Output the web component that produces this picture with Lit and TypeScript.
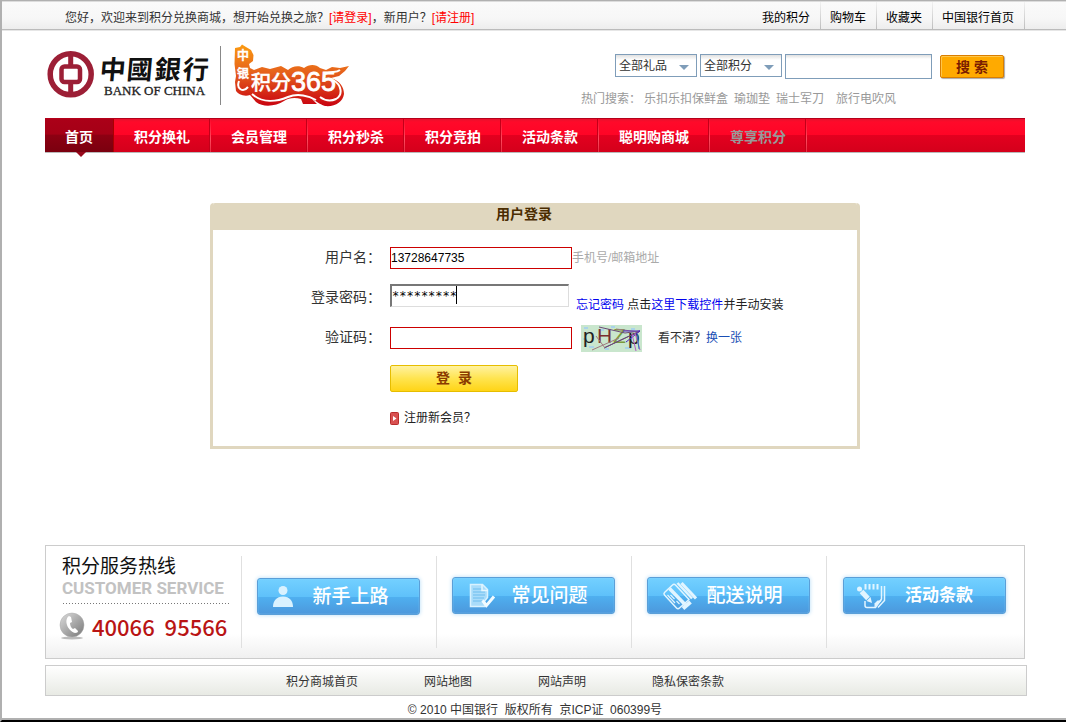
import { LitElement, html, css, svg } from "lit";
import { customElement } from "lit/decorators.js";
import { classMap } from "lit/directives/class-map.js";

const topLinks = ["我的积分", "购物车", "收藏夹", "中国银行首页"];
const hotWords = ["乐扣乐扣保鲜盒", "瑜珈垫", "瑞士军刀", "旅行电吹风"];
const navItems = ["首页", "积分换礼", "会员管理", "积分秒杀", "积分竞拍", "活动条款", "聪明购商城", "尊享积分"];
const footLinks = ["积分商城首页", "网站地图", "网站声明", "隐私保密条款"];

const personIcon = svg`<svg width="28" height="30" viewBox="0 0 28 30" fill="#d9f2ff">
  <circle cx="12" cy="8.500" r="4.500"/><path d="M2 25c0-6 3.500-10.500 10-10.500S22 19 22 25z"/></svg>`;

const pageIcon = svg`<svg width="36" height="30" viewBox="0 0 36 30">
  <path d="M4.500 3.500h12l5 5v8l-4 5 2 4h-15z" fill="#a9dcfa" stroke="#d9f2ff" stroke-width="1.500"/>
  <path d="M7 8h9M7 11h12M7 14h12M7 17h11M7 20h9" stroke="#6dbdee"/>
  <path d="M16 3.500v6h6" fill="none" stroke="#e6f7ff" stroke-width="1.500"/>
  <path d="M16.500 19.500l4 5 7.500-9" fill="none" stroke="#f2fbff" stroke-width="3"/></svg>`;

const cardIcon = svg`<svg width="36" height="30" viewBox="0 0 36 30" fill="none" stroke="#e2f5ff" stroke-linejoin="round">
  <path d="M3.500 11.500l8-7.500c1-1 2-1 3 0L28 18.500 18.500 27c-1 1-2 1-3 0L3.500 14c-.8-1-.8-1.700 0-2.500z" stroke-width="1.500"/>
  <path d="M8.500 7.500L24 23.500" stroke-width="3.500"/>
  <path d="M6.500 14l7.500 8M9.500 14l4 4M15.500 20l3 3" stroke-width="1.200"/>
  <path d="M16.500 2L31 17.500" stroke-width="2.500"/><path d="M20.500 2L35 17.500" stroke-width="3"/>
  <path d="M22 27.500l7.500-6.500" stroke-width="4"/></svg>`;

const notePadIcon = svg`<svg width="36" height="30" viewBox="0 0 36 30" fill="none" stroke="#e2f5ff">
  <path d="M8.500 3v5.500M12.500 3v5.500M16.500 3v5.500M20.500 3v5.500" stroke-width="2"/>
  <path d="M24.500 5v13l-6 8.500h-8.500c-1.500 0-2-1-2-2V20" stroke-width="1.500"/>
  <path d="M27.500 5v14.500L21 26.500" stroke-width="1.500"/>
  <path d="M17.500 26.500v-4l3-3h4.500z" fill="#e2f5ff" stroke="none"/>
  <path d="M4.500 10.500l6.500 7" stroke-width="5"/>
  <circle cx="2.500" cy="8" r="2.500" fill="#e2f5ff" stroke="none"/>
  <path d="M9.500 20l4-4 1.500 6z" fill="#e2f5ff" stroke="none"/></svg>`;

const services = [
  { text: "新手上路", icon: personIcon, low: true, bold: false },
  { text: "常见问题", icon: pageIcon, low: false, bold: false },
  { text: "配送说明", icon: cardIcon, low: false, bold: false },
  { text: "活动条款", icon: notePadIcon, low: false, bold: true },
];

@customElement("app-root")
export class AppRoot extends LitElement {
  static styles = css`
    :host {
      display: block;
      min-height: 100vh;
      box-sizing: border-box;
      border-top: 1px solid #b0b0b0;
      border-left: 2px solid #b0b0b0;
      border-bottom: 2px solid #000;
      background: #fff;
      color: #333;
      font: 12px/16px "Liberation Sans", "Noto Sans CJK SC", sans-serif;
    }
    * { box-sizing: border-box; }
    a { color: inherit; text-decoration: none; }
    ul { list-style: none; margin: 0; padding: 0; }
    input, select, button { font-family: inherit; border-radius: 0; }
    .page { padding-left: 2px; border-bottom: 2px solid #b0b0b0; }
    .wrap { max-width: 980px; margin: 0 auto; }

    .topbar {
      margin-left: -2px;
      padding-left: 2px;
      background: linear-gradient(#fafafa, #f7f7f7 60%, #ededed);
      border-top: 1px solid #dcdcdc;
      border-bottom: 1px solid #bbb;
      box-shadow: 0 1px #e6e6e6;
    }
    .topbar .wrap { display: flex; justify-content: space-between; height: 27px; }
    .hello { margin: 0; padding: 0 0 0 20px; line-height: 32px; }
    .hello a { color: #f00; }
    .toplinks { display: flex; color: #000; line-height: 32px; }
    .toplinks li {
      padding: 0 10px 0 9px;
      border-right: 1px solid;
      border-image: linear-gradient(#f4f4f4, #bbb) 1;
    }

    .header { display: flex; justify-content: space-between; height: 88px; }
    .logo { display: block; }
    .search { padding: 24px 21px 0 0; width: 464px; }
    .controls { display: flex; justify-content: flex-end; align-items: flex-start; gap: 3px; }
    .picker { position: relative; display: flex; }
    .picker svg { position: absolute; right: 8px; top: 11px; pointer-events: none; }
    .pick {
      appearance: none;
      width: 82px;
      height: 23px;
      padding: 1px 0 0 3px;
      border: 1px solid #7f9db9;
      background: linear-gradient(#e0e0e0, #fff 5px);
      color: #333;
      font-size: 12px;
    }
    .keyword {
      width: 147px;
      height: 25px;
      border: 1px solid #7f9db9;
      background: linear-gradient(#e0e0e0, #fff 4px);
    }
    .go {
      width: 64px;
      height: 23px;
      margin: 1px 0 0 5px;
      padding: 0;
      border: 1px solid #d97e00;
      border-radius: 2px;
      background: #fa0;
      box-shadow: 1px 1px 1px #aaa, inset 1px 1px #ffc64a;
      color: #7a1c00;
      font-size: 14px;
      font-weight: 700;
      line-height: 22px;
      white-space: pre;
    }
    .hot { display: flex; gap: 6px; color: #999; margin: 0; padding: 12px 0 0 20px; white-space: nowrap; }
    .hot dt { margin-right: -3px; }
    .hot dd { margin: 0; }
    .hot dd:last-child { margin-left: 6px; }

    .nav {
      display: flex;
      height: 35px;
      border-top: 1px solid #b5001a;
      border-bottom: 1px solid #b9b9b9;
      background: linear-gradient(#e8102c, #ff0a2a 3px, #ff0426 48%, #e3001f 50%, #d4001b);
      color: #fff;
      font-size: 14px;
      font-weight: 700;
      line-height: 36px;
    }
    .nav li {
      position: relative;
      padding: 0 20px;
      border-right: 1px solid;
      border-image: linear-gradient(#ff0426, #ff4a5e 60%, #e82a40) 1;
      box-shadow: inset -1px 0 #c20019;
    }
    .nav .on {
      background: linear-gradient(#ab0018, #a50016 45%, #8c0012 50%, #7a000f);
      border-right: 1px solid #a00;
      border-image: none;
      box-shadow: none;
    }
    .nav .on::after {
      content: "";
      position: absolute;
      left: 31px;
      top: 33px;
      border: 5px solid transparent;
      border-top-color: #98091c;
      border-bottom: 0;
    }
    .nav .dim { color: #999; }

    .login { max-width: 650px; margin: 50px auto 96px; border: 3px solid #e0d7bf; border-top: 0; border-radius: 4px 4px 0 0; }
    .login h1 {
      margin: 0;
      padding-right: 22px;
      height: 27px;
      background: #e0d7bf;
      border-radius: 2px 2px 0 0;
      color: #4a2c00;
      font-size: 14px;
      line-height: 23px;
      text-align: center;
    }
    .login form { padding: 8px 0; }
    .row { display: grid; grid-template-columns: 168px 1fr; column-gap: 9px; height: 40px; align-items: center; }
    .row label { padding-bottom: 2px; font-size: 14px; line-height: 20px; text-align: right; }
    .cell { grid-column: 2; display: flex; align-items: center; height: 100%; }
    .field {
      width: 182px;
      height: 22px;
      padding: 0;
      border: 1px solid #c00;
      background: #fff;
      color: #000;
      font-size: 12px;
      outline: none;
    }
    .hint { color: #aaa; }
    .secret { position: relative; display: flex; padding-bottom: 5px; }
    .secret .field {
      width: 179px;
      height: 23px;
      border: 2px solid;
      border-color: #777 #ddd #ddd #777;
      border-width: 2px 1px 1px 2px;
      font: 12px "DejaVu Sans Mono", monospace;
    }
    .caret { position: absolute; left: 66px; top: 2px; width: 1px; height: 18px; background: #000; }
    .tips { align-self: flex-end; margin: 0; padding: 0 0 5px 7px; color: #222; }
    .tips a { color: #00e; }
    .captcha { display: block; margin: 0 16px 0 9px; }
    .swap { color: #1a4fb5; }
    .submit {
      width: 128px;
      height: 27px;
      padding: 0 0 2px;
      border: 1px solid #e6bd00;
      border-radius: 2px;
      background: linear-gradient(#fff2a0, #ffe44f 50%, #ffd416);
      color: #8a3a00;
      font-size: 14px;
      font-weight: 700;
      white-space: pre;
    }
    .join { display: flex; align-items: center; gap: 5px; color: #222; }

    .services {
      display: grid;
      grid-template-columns: repeat(4, 20fr) 20.3fr;
      border: 1px solid #ccc;
      padding: 10px 0;
      height: 114px;
      background: linear-gradient(#fff 78%, #f0f0f0);
    }
    .services > * + * { border-left: 1px solid #e0e0e0; }
    .phone { padding-left: 16px; }
    .phone h2 { margin: 0; color: #111; font-size: 19px; font-weight: 400; line-height: 21px; }
    .en { margin: 0; color: #c2c2c2; font: 700 17px/22px Roboto, sans-serif; }
    .number {
      display: flex;
      align-items: center;
      gap: 7px;
      margin: 4px 10px 0 1px;
      padding-top: 7px;
      color: #b91414;
      font: 500 22px/32px "Noto Sans CJK SC", sans-serif;
      white-space: pre;
      background: repeating-linear-gradient(90deg, #777 0 1px, transparent 1px 3px) 0 0 / 100% 1px no-repeat;
    }
    .number svg { margin-left: -4px; flex: none; }
    .service { display: flex; align-items: flex-start; justify-content: center; padding: 21px 2px 0 0; }
    .service.low { padding-top: 22px; }
    .bluebtn {
      display: flex;
      align-items: center;
      width: 163px;
      height: 37px;
      padding: 0 16px 0 13px;
      border: 1px solid #5a9fd8;
      border-radius: 3px;
      background: linear-gradient(#73d0ff, #5fc1fa 50%, #4fb0f0 51%, #4c98dc);
      box-shadow: 0 0 4px #b5dcf7, inset 0 0 1px #a8e0ff;
      color: #fff;
      font-size: 19px;
      font-weight: 500;
      line-height: 34px;
    }
    .bluebtn span { flex: 1; text-align: center; white-space: nowrap; }
    .bluebtn.bold { padding-right: 20px; font-size: 17px; font-weight: 700; }
    .bluebtn svg { flex: none; }

    .links {
      display: flex;
      gap: 66px;
      margin: 6px -2px 0 0;
      padding-left: 240px;
      height: 31px;
      border: 1px solid #ccc;
      background: linear-gradient(#fff, #e8eae4);
      line-height: 32px;
    }
    .copy { margin: 0; padding: 7px 0 0; height: 22px; line-height: 15px; text-align: center; white-space: pre; }
  `;

  private renderLogo() {
    return svg`<svg class="logo" width="310" height="80" viewBox="45 30 310 80">
      <defs><linearGradient id="fire" gradientUnits="userSpaceOnUse" x1="0" y1="45" x2="0" y2="107">
        <stop offset="0" stop-color="#fb9a10"/><stop offset=".45" stop-color="#e5601c"/><stop offset="1" stop-color="#c80010"/>
      </linearGradient></defs>
      <circle cx="70.700" cy="74.300" r="20.500" fill="none" stroke="#9c1f36" stroke-width="5.500"/>
      <path d="M70.700 52v14M70.700 83v14" stroke="#9c1f36" stroke-width="5"/>
      <rect x="61.500" y="66.500" width="18.500" height="15.500" rx="3" fill="none" stroke="#9c1f36" stroke-width="4.500"/>
      <text y="79" transform="skewX(-5)" font-family="'Noto Sans CJK TC','Noto Sans CJK SC',sans-serif" font-size="26" font-weight="700" fill="#111">
        <tspan x="106">中</tspan><tspan x="133">國</tspan><tspan x="161">銀</tspan><tspan x="189">行</tspan></text>
      <text x="104" y="95" font-family="Liberation Serif, serif" font-size="13" fill="#222" stroke="#222" stroke-width=".3">BANK OF CHINA</text>
      <path d="M220.500 46v59" stroke="#888"/>
      <path fill="url(#fire)" d="M235 48L240 47 242 44.500 246 47 251 50 253.500 55 253 61 249 64 250 68 254 70 262 67 270 69 281 66 288 70C292 66 299 65 304 68C309 64 316 64 320 68L326 70 332 67 340 68 349 66 345 71 339 76 331 78C340 81 344 87 344 94C343 102 335 107 325 106C319 104 316 101 312 99L317 104H303L301 99C295 97 288 98 284 101C276 106 264 108 256 102L250 95C244 97 238 94 236 91L235 82 236 76 234.500 64Z"/>
      <g fill="#fff" font-family="'Noto Sans CJK SC',sans-serif" font-weight="500" stroke="#fff">
        <text x="237" y="60" font-size="12" stroke-width=".5">中</text>
        <text x="237" y="78" font-size="12" stroke-width=".5">银</text>
        <text x="251" y="90" font-size="20" stroke-width=".4">积分</text>
        <text x="291" y="91" font-size="27" font-family="Liberation Sans, sans-serif" font-weight="400" stroke-width=".8">365</text>
      </g>
      <path d="M239 81C236 89 243 93 248 87M252 94C262 103 276 102 288 97C298 93 309 96 316 100M325 74C331 71 336 73 340 70M333 80C342 85 343 95 336 99C330 102 324 100 320 97" fill="none" stroke="#fff" stroke-width="2"/>
    </svg>`;
  }

  private renderCaptcha() {
    return svg`<svg class="captcha" width="61" height="27" viewBox="0 0 61 27">
      <rect width="61" height="27" fill="#c9e6cd"/>
      <path d="M3 3h4M20 5h3M50 4h4M8 22h5M44 23h6M30 2h4M2 14h3M24 24h4" stroke="#a9d3ea" stroke-width="2"/>
      <g font-family="'Liberation Sans', sans-serif" font-size="21">
        <text x="2" y="18" fill="#222">p</text><text x="16" y="18" fill="#7a3030">H</text>
        <text x="32" y="18" fill="#7a9a3c">Z</text><text x="47" y="19" fill="#222">p</text>
      </g>
      <path d="M18 2l26 6 15-2-36 17 34-16" fill="none" stroke="#6b4a78"/>
      <path d="M15 11l9 12M35 4l23 3M11 25l27-12" fill="none" stroke="#a07a80"/>
      <path d="M42 6h17l-14 11" fill="none" stroke="#4a22c0"/>
      <path d="M51 9l4 17M54 8l5 17" stroke="#b05ac8"/><path d="M56 9l2 15" stroke="#3878c0"/>
    </svg>`;
  }

  private renderPicker(name: string, text: string) {
    return html`<div class="picker">
      <select class="pick" aria-label=${name}><option>${text}</option></select>
      <svg width="10" height="5" viewBox="0 0 10 5"><path d="M0 0h10L5 5z" fill="#7f9db9"/></svg>
    </div>`;
  }

  render() {
    return html`
      <div class="page">
        <div class="topbar">
          <div class="wrap">
            <p class="hello">您好，欢迎来到积分兑换商城，想开始兑换之旅？<a href="#">[请登录]</a>，新用户？<a href="#">[请注册]</a></p>
            <ul class="toplinks">${topLinks.map((t) => html`<li><a href="#">${t}</a></li>`)}</ul>
          </div>
        </div>
        <div class="wrap">
          <header class="header">
            ${this.renderLogo()}
            <div class="search">
              <div class="controls">
                ${this.renderPicker("礼品", "全部礼品")}
                ${this.renderPicker("积分", "全部积分")}
                <input class="keyword" type="text" aria-label="搜索" />
                <button class="go" type="button">搜 索</button>
              </div>
              <dl class="hot">
                <dt>热门搜索：</dt>
                ${hotWords.map((t) => html`<dd><a href="#">${t}</a></dd>`)}
              </dl>
            </div>
          </header>
          <nav>
            <ul class="nav">
              ${navItems.map((t, i) => html`<li class=${classMap({ on: i === 0, dim: i === 7 })}><a href="#">${t}</a></li>`)}
            </ul>
          </nav>
          <section class="login">
            <h1>用户登录</h1>
            <form>
              <div class="row">
                <label for="user">用户名：</label>
                <div class="cell"><input class="field" id="user" type="text" value="13728647735" /><span class="hint">手机号/邮箱地址</span></div>
              </div>
              <div class="row">
                <label for="pwd">登录密码：</label>
                <div class="cell">
                  <div class="secret"><input class="field" id="pwd" type="text" autocomplete="off" value="*********" /><i class="caret"></i></div>
                  <p class="tips"><a href="#">忘记密码</a> 点击<a href="#">这里下载控件</a>并手动安装</p>
                </div>
              </div>
              <div class="row">
                <label for="code">验证码：</label>
                <div class="cell"><input class="field" id="code" type="text" />${this.renderCaptcha()}<span>看不清？<a class="swap" href="#">换一张</a></span></div>
              </div>
              <div class="row"><div class="cell"><button class="submit" type="button">登  录</button></div></div>
              <div class="row">
                <div class="cell">
                  <a class="join" href="#"><svg width="9" height="13" viewBox="0 0 9 13"><rect x=".5" y=".5" width="8" height="12" rx="1" fill="#d85050" stroke="#b82c2c"/><path d="M3 4l3.500 2.500L3 9z" fill="#fff"/></svg>注册新会员？</a>
                </div>
              </div>
            </form>
          </section>
          <footer>
            <div class="services">
              <div class="phone">
                <h2>积分服务热线</h2>
                <p class="en">CUSTOMER SERVICE</p>
                <div class="number"><svg width="26" height="28" viewBox="0 0 26 28"><defs><linearGradient id="ball" x2="1" y2="1"><stop offset="0" stop-color="#ddd"/><stop offset="1" stop-color="#777"/></linearGradient></defs><ellipse cx="13" cy="26" rx="11" ry="1.500" fill="#bbb"/><circle cx="13" cy="13" r="12" fill="url(#ball)" stroke="#aaa" stroke-width=".5"/><path d="M10 4c-3 2-3 6-2 9s4 7 8 8c2 0 3-1 3-2l-3-3-2 1c-2-1-3-4-3-6l2-1-1-5z" fill="#fff"/></svg><span>40066  95566</span></div>
              </div>
              ${services.map((s) => html`<div class=${classMap({ service: true, low: s.low })}><a href="#" class=${classMap({ bluebtn: true, bold: s.bold })}>${s.icon}<span>${s.text}</span></a></div>`)}
            </div>
            <ul class="links">${footLinks.map((t) => html`<li><a href="#">${t}</a></li>`)}</ul>
            <p class="copy">© 2010 中国银行  版权所有  京ICP证  060399号</p>
          </footer>
        </div>
      </div>
    `;
  }
}
